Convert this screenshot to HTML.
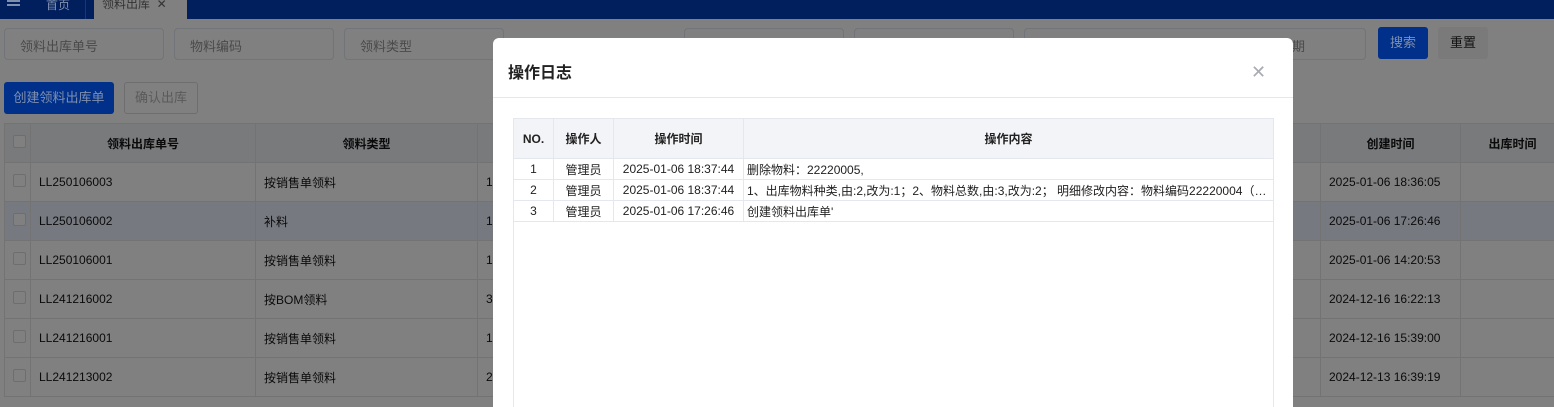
<!DOCTYPE html>
<html><head><meta charset="utf-8"><style>
*{margin:0;padding:0;box-sizing:border-box}
html,body{width:1554px;height:407px;overflow:hidden}
body{background:#808080;font-family:"Liberation Sans","Noto Sans CJK SC",sans-serif;font-size:12px;color:#0a0a0a;position:relative}
.abs{position:absolute}
.nav{left:0;top:0;width:1554px;height:19px;background:#001f5c}
.inp{height:32px;top:28px;border:1px solid #717478;border-radius:4px;background:#808080;color:#4a4a4a;font-size:13px;padding:7px 15px}
.th{background:#787a7c;font-weight:bold;text-align:center}
.bg td{border:1px solid #737373;height:39px;padding:0 8px;font-size:12px}
.cb{display:inline-block;width:13px;height:13px;border:1px solid #6e6e6e;border-radius:2px;background:#808080}
.modal{left:493px;top:38px;width:800px;height:369px;background:#fff;border-radius:6px 6px 0 0;overflow:hidden}
.lt{border-collapse:collapse;position:absolute;left:20px;top:80px;width:760px;table-layout:fixed}
.lt td{border:1px solid #e4e7ed;height:21px;padding:0 3px;font-size:12px;color:#222;white-space:nowrap;overflow:hidden;text-overflow:ellipsis}
.lt tr.h td{background:#f3f4f8;height:40px;font-weight:bold;text-align:center}
</style></head><body>
<div class="abs nav"></div>
<div class="abs" style="left:7px;top:0;width:13px;height:2px;background:#7f8fae;box-shadow:0 4px 0 #7f8fae"></div>
<div class="abs" style="left:46px;top:-4px;color:#8090b0;font-size:12px">首页</div>
<div class="abs" style="left:85px;top:0;width:1px;height:19px;background:#1a3570"></div>
<div class="abs" style="left:94px;top:0;width:93px;height:19px;background:#808080;color:#333;font-size:12px;padding:0 8px;line-height:8px">领料出库 &nbsp;✕</div>
<div class="abs inp" style="left:4px;width:160px">领料出库单号</div>
<div class="abs inp" style="left:174px;width:160px">物料编码</div>
<div class="abs inp" style="left:344px;width:160px">领料类型</div>
<div class="abs inp" style="left:684px;width:160px"></div>
<div class="abs inp" style="left:854px;width:160px"></div>
<div class="abs inp" style="left:1024px;width:342px;padding-left:160px;text-align:right;padding-right:60px">日期</div>
<div class="abs" style="left:1378px;top:27px;width:50px;height:32px;background:#00308a;border-radius:3px;color:#7f8fae;text-align:center;line-height:32px;font-size:13px">搜索</div>
<div class="abs" style="left:1438px;top:27px;width:50px;height:32px;background:#7a7a7a;border-radius:3px;color:#111;text-align:center;line-height:32px;font-size:13px">重置</div>
<div class="abs" style="left:4px;top:82px;width:110px;height:32px;background:#00308a;border-radius:3px;color:#7f8fae;text-align:center;line-height:32px;font-size:13px">创建领料出库单</div>
<div class="abs" style="left:124px;top:82px;width:74px;height:32px;border:1px solid #6e6e6e;border-radius:3px;color:#5a5a5a;text-align:center;line-height:30px;font-size:13px">确认出库</div>
<div class="abs" style="left:0;top:123px;width:1554px;height:284px;overflow:hidden">
<table class="abs bg" style="left:4px;top:0;border-collapse:collapse;table-layout:fixed;width:1560px">
<colgroup><col style="width:26px"><col style="width:225px"><col style="width:222px"><col style="width:843px"><col style="width:140px"><col style="width:104px"></colgroup>
<tr class="th"><td><span class="cb"></span></td><td>领料出库单号</td><td>领料类型</td><td></td><td>创建时间</td><td>出库时间</td></tr>
<tr><td><span class="cb"></span></td><td>LL250106003</td><td>按销售单领料</td><td>1</td><td>2025-01-06 18:36:05</td><td></td></tr>
<tr style="background:#767a80"><td><span class="cb"></span></td><td>LL250106002</td><td>补料</td><td>1</td><td>2025-01-06 17:26:46</td><td></td></tr>
<tr><td><span class="cb"></span></td><td>LL250106001</td><td>按销售单领料</td><td>1</td><td>2025-01-06 14:20:53</td><td></td></tr>
<tr><td><span class="cb"></span></td><td>LL241216002</td><td>按BOM领料</td><td>3</td><td>2024-12-16 16:22:13</td><td></td></tr>
<tr><td><span class="cb"></span></td><td>LL241216001</td><td>按销售单领料</td><td>1</td><td>2024-12-16 15:39:00</td><td></td></tr>
<tr><td><span class="cb"></span></td><td>LL241213002</td><td>按销售单领料</td><td>2</td><td>2024-12-13 16:39:19</td><td></td></tr>
</table>
</div>
<div class="abs modal">
<div class="abs" style="left:15px;top:21px;font-size:16px;font-weight:bold;color:#222">操作日志</div>
<div class="abs" style="left:758px;top:25px;color:#a8abb2;font-size:18px;line-height:18px">✕</div>
<div class="abs" style="left:0;top:59px;width:800px;height:1px;background:#e4e7ed"></div>
<table class="lt">
<colgroup><col style="width:40px"><col style="width:60px"><col style="width:130px"><col style="width:530px"></colgroup>
<tr class="h"><td>NO.</td><td>操作人</td><td>操作时间</td><td>操作内容</td></tr>
<tr><td style="text-align:center">1</td><td style="text-align:center">管理员</td><td style="text-align:center">2025-01-06 18:37:44</td><td>删除物料：22220005,</td></tr>
<tr><td style="text-align:center">2</td><td style="text-align:center">管理员</td><td style="text-align:center">2025-01-06 18:37:44</td><td>1、出库物料种类,由:2,改为:1；2、物料总数,由:3,改为:2； 明细修改内容：物料编码22220004（1...</td></tr>
<tr><td style="text-align:center">3</td><td style="text-align:center">管理员</td><td style="text-align:center">2025-01-06 17:26:46</td><td>创建领料出库单'</td></tr>
<tr><td style="height:200px;border-bottom:none;border-right:none"></td><td style="border:none;border-top:1px solid #e4e7ed"></td><td style="border:none;border-top:1px solid #e4e7ed"></td><td style="border-left:none;border-bottom:none"></td></tr>
</table>
</div>
</body></html>
